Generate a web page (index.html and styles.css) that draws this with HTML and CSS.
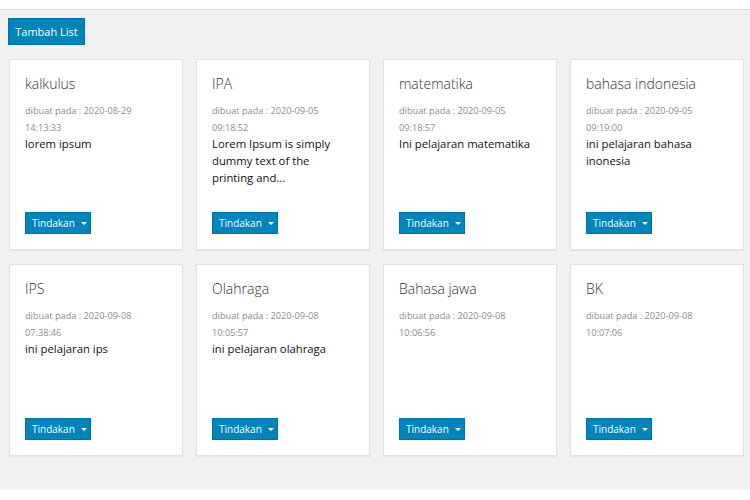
FILE: index.html
```html
<!DOCTYPE html>
<html>
<head>
<meta charset="utf-8">
<link rel="stylesheet" href="styles.css">
</head>
<body>
<div class="topbar"></div>
<main class="main">
  <button class="btn btn-add">Tambah List</button>
  <div class="grid">
    <div class="card">
      <h2 class="title">kalkulus</h2>
      <div class="date">dibuat pada : 2020-08-29<br>14:13:33</div>
      <p class="desc">lorem ipsum</p>
      <button class="btn btn-action">Tindakan <span class="caret"></span></button>
    </div>
    <div class="card">
      <h2 class="title">IPA</h2>
      <div class="date">dibuat pada : 2020-09-05<br>09:18:52</div>
      <p class="desc">Lorem Ipsum is simply dummy text of the<br>printing and...</p>
      <button class="btn btn-action">Tindakan <span class="caret"></span></button>
    </div>
    <div class="card">
      <h2 class="title">matematika</h2>
      <div class="date">dibuat pada : 2020-09-05<br>09:18:57</div>
      <p class="desc">Ini pelajaran matematika</p>
      <button class="btn btn-action">Tindakan <span class="caret"></span></button>
    </div>
    <div class="card">
      <h2 class="title">bahasa indonesia</h2>
      <div class="date">dibuat pada : 2020-09-05<br>09:19:00</div>
      <p class="desc">ini pelajaran bahasa inonesia</p>
      <button class="btn btn-action">Tindakan <span class="caret"></span></button>
    </div>
    <div class="card">
      <h2 class="title">IPS</h2>
      <div class="date">dibuat pada : 2020-09-08<br>07:38:46</div>
      <p class="desc">ini pelajaran ips</p>
      <button class="btn btn-action">Tindakan <span class="caret"></span></button>
    </div>
    <div class="card">
      <h2 class="title">Olahraga</h2>
      <div class="date">dibuat pada : 2020-09-08<br>10:05:57</div>
      <p class="desc">ini pelajaran olahraga</p>
      <button class="btn btn-action">Tindakan <span class="caret"></span></button>
    </div>
    <div class="card">
      <h2 class="title">Bahasa jawa</h2>
      <div class="date">dibuat pada : 2020-09-08<br>10:06:56</div>
      <p class="desc"></p>
      <button class="btn btn-action">Tindakan <span class="caret"></span></button>
    </div>
    <div class="card">
      <h2 class="title">BK</h2>
      <div class="date">dibuat pada : 2020-09-08<br>10:07:06</div>
      <p class="desc"></p>
      <button class="btn btn-action">Tindakan <span class="caret"></span></button>
    </div>
  </div>
</main>
</body>
</html>
```
FILE: styles.css
```css
html, body {
  margin: 0;
  padding: 0;
  background: #ffffff;
  font-family: "Open Sans", "Liberation Sans", sans-serif;
}
.topbar {
  height: 9px;
  background: #ffffff;
  border-bottom: 1px solid #dcdcdc;
}
.main {
  background: #f1f1f1;
  padding: 8px 6px 34px 9px;
  display: flex;
  flex-direction: column;
  align-items: flex-start;
}
.btn {
  background: #0085ba;
  border: 1px solid #0073aa;
  color: #ffffff;
  font-family: "Open Sans", "Liberation Sans", sans-serif;
  cursor: pointer;
  border-radius: 0;
  margin: 0;
}
.btn-add {
  height: 27px;
  width: 77px;
  padding: 0;
  font-size: 11px;
  margin-left: -1px;
}
.grid {
  margin-top: 14px;
  align-self: stretch;
  display: grid;
  grid-template-columns: repeat(4, 174px);
  column-gap: 13px;
  row-gap: 14px;
}
.card {
  height: 191px;
  box-sizing: border-box;
  background: #ffffff;
  border: 1px solid #e2e2e2;
  box-shadow: 0 1px 1px rgba(0, 0, 0, 0.05);
  padding: 15px 15px 15px 15px;
  display: flex;
  flex-direction: column;
  align-items: flex-start;
}
.card:nth-child(n+5) {
  height: 192px;
}
.title {
  margin: 0;
  font-size: 14px;
  font-weight: 300;
  line-height: 18px;
  color: #333333;
}
.date {
  margin-top: 9px;
  font-size: 9.2px;
  line-height: 17px;
  color: #8c8c8c;
}
.desc {
  margin: -1px 0 0 0;
  font-size: 11.3px;
  line-height: 17px;
  color: #111111;
}
.btn-action {
  margin-top: auto;
  height: 22px;
  width: 66px;
  padding: 0 0 0 6px;
  font-size: 10px;
  display: flex;
  align-items: center;
  gap: 6px;
}
.caret {
  width: 0;
  height: 0;
  border-left: 3px solid transparent;
  border-right: 3px solid transparent;
  border-top: 3px solid #ffffff;
}
```
